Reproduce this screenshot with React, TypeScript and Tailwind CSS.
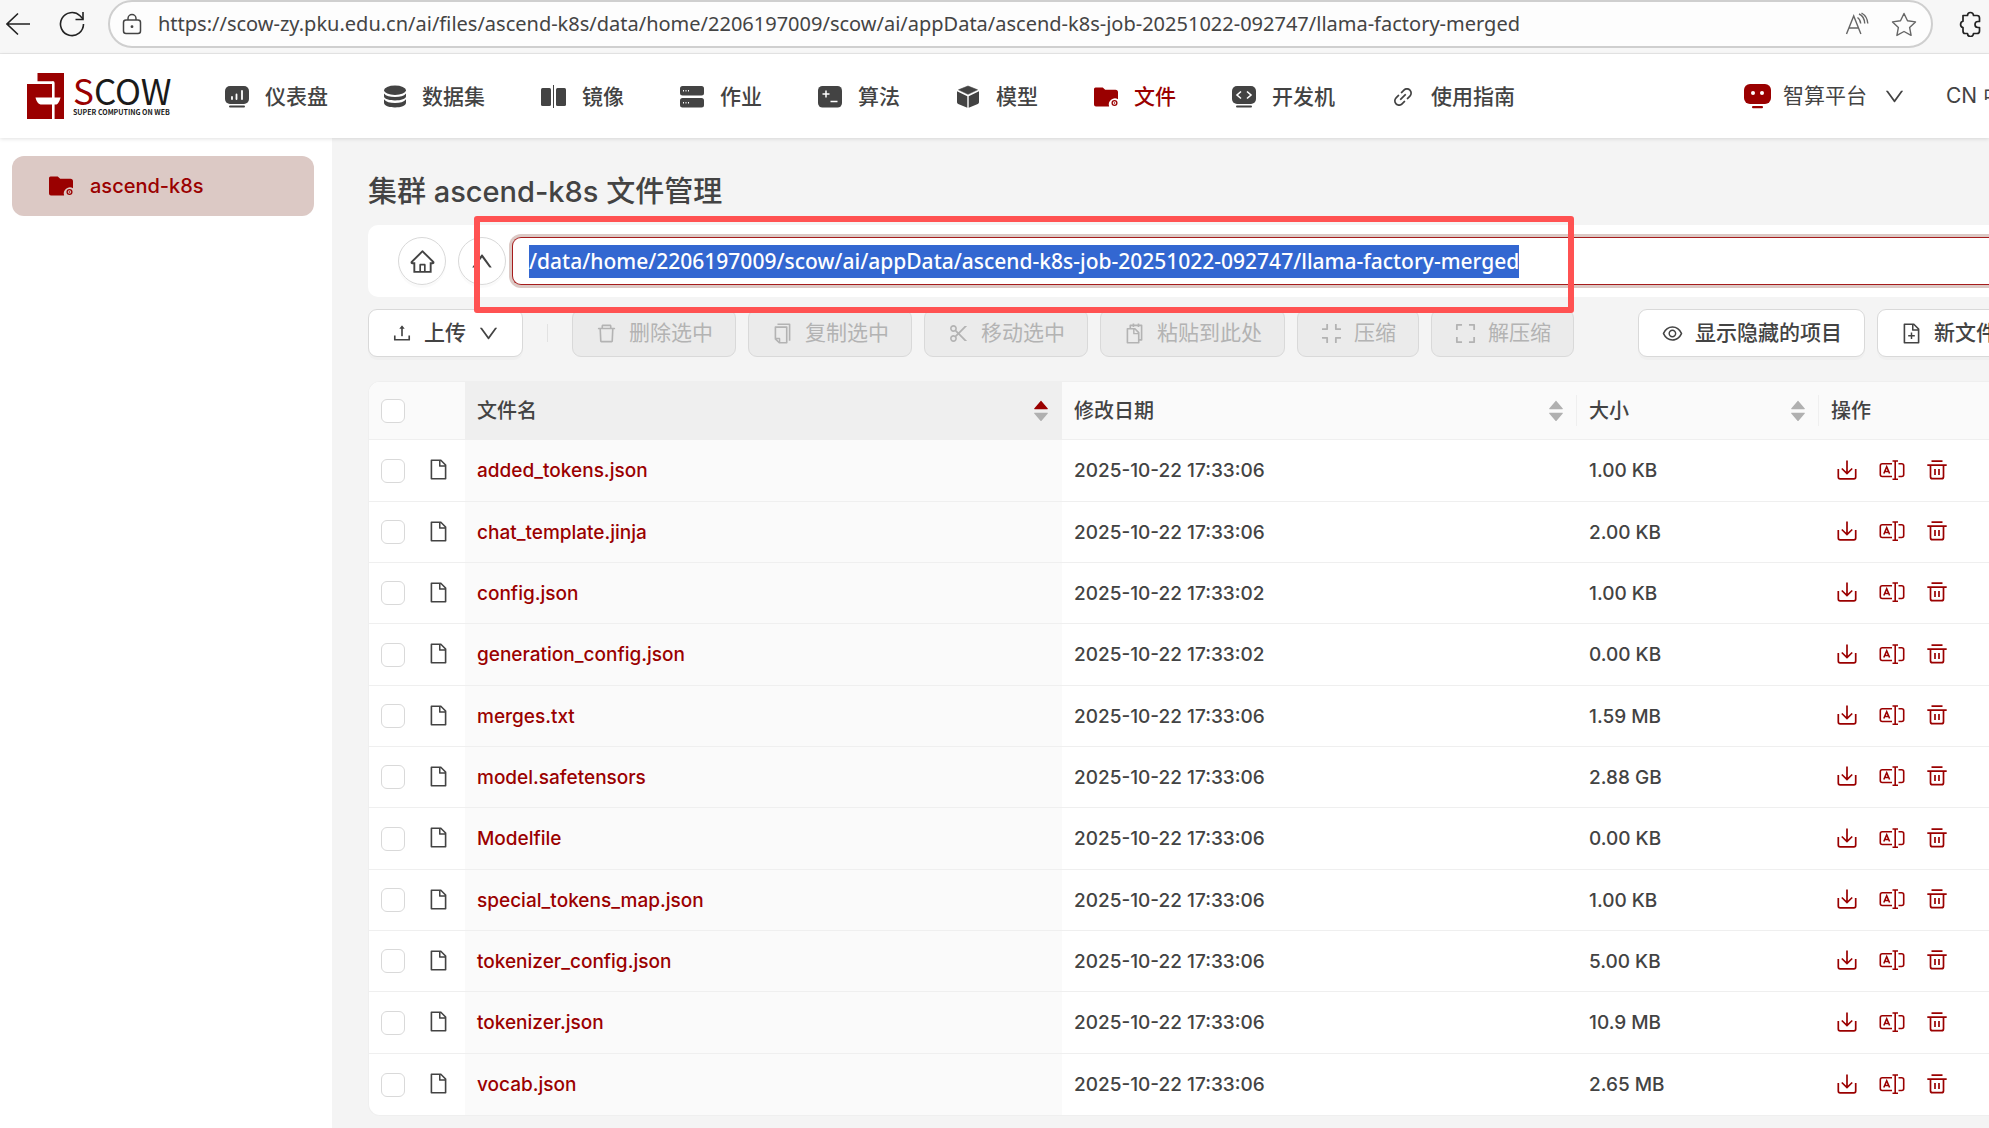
import type { ReactNode } from 'react';
import {
  AiOutlineHome, AiOutlineUp, AiOutlineUpload, AiOutlineDown, AiOutlineDelete, AiOutlineCopy,
  AiOutlineScissor, AiOutlineSnippets, AiOutlineCompress, AiOutlineExpand, AiOutlineEye,
  AiOutlineFileAdd, AiOutlineFile, AiFillCaretUp, AiFillCaretDown, AiOutlineLink,
} from 'react-icons/ai';

const FILES = [
  ['added_tokens.json', '2025-10-22 17:33:06', '1.00 KB'],
  ['chat_template.jinja', '2025-10-22 17:33:06', '2.00 KB'],
  ['config.json', '2025-10-22 17:33:02', '1.00 KB'],
  ['generation_config.json', '2025-10-22 17:33:02', '0.00 KB'],
  ['merges.txt', '2025-10-22 17:33:06', '1.59 MB'],
  ['model.safetensors', '2025-10-22 17:33:06', '2.88 GB'],
  ['Modelfile', '2025-10-22 17:33:06', '0.00 KB'],
  ['special_tokens_map.json', '2025-10-22 17:33:06', '1.00 KB'],
  ['tokenizer_config.json', '2025-10-22 17:33:06', '5.00 KB'],
  ['tokenizer.json', '2025-10-22 17:33:06', '10.9 MB'],
  ['vocab.json', '2025-10-22 17:33:06', '2.65 MB'],
];

/* ---------- icons ---------- */

const DashboardIcon = () => (
  <svg width="24" height="24" viewBox="0 0 24 24" fill="currentColor" aria-hidden="true">
    <rect y="1" width="24" height="18" rx="5" />
    <g stroke="#fff" strokeWidth="1.8" strokeLinecap="round">
      <path d="M7 12v2M11.500 9.500v4.500M17 6v8" />
    </g>
    <rect x="4" y="20.500" width="16" height="2" rx="1" />
  </svg>
);

const DatasetIcon = () => (
  <svg width="22" height="24" viewBox="1 0 22 24" fill="currentColor" aria-hidden="true">
    <ellipse cx="12" cy="5.200" rx="11" ry="4.700" />
    <path d="M1 8.500c2 2.600 6 3.400 11 3.400s9-.8 11-3.400v2.700c0 2.500-5 4.200-11 4.200S1 13.700 1 11.200z" />
    <path d="M1 14.300c2 2.800 6 3.700 11 3.700s9-.9 11-3.700v3.500c0 2.900-5 4.700-11 4.700S1 20.700 1 17.800z" />
  </svg>
);

const ImageIcon = () => (
  <svg width="25" height="24" viewBox="0 0 25 24" fill="currentColor" aria-hidden="true">
    <rect y="3" width="10" height="18" rx="1.500" />
    <rect x="12" width="1" height="23" />
    <rect x="15" y="3" width="10" height="18" rx="1.500" />
  </svg>
);

const JobIcon = () => (
  <svg width="24" height="24" viewBox="0 0 24 24" fill="currentColor" aria-hidden="true">
    <rect y="1" width="24" height="9.500" rx="2.500" />
    <rect y="13" width="24" height="9.500" rx="2.500" />
    <g fill="#fff">
      <path d="M3 5h1v1.500H3zM5.500 5h1v1.500h-1zM8 5h1v1.500H8zM3 17h1v1.500H3zM5.500 17h1v1.500h-1zM8 17h1v1.500H8z" />
    </g>
  </svg>
);

const AlgorithmIcon = () => (
  <svg width="24" height="24" viewBox="0 0 24 24" fill="currentColor" aria-hidden="true">
    <rect y="1" width="24" height="21.500" rx="4.500" />
    <path d="M8 5.500v7M4.500 9h7M12.500 16.500h7" stroke="#fff" strokeWidth="1.500" />
  </svg>
);

const ModelIcon = () => (
  <svg width="24" height="24" viewBox="0 0 24 24" fill="currentColor" aria-hidden="true">
    <path d="M12 1l9.500 3.800L12 9.300 2.500 4.800z" strokeLinejoin="round" stroke="currentColor" strokeWidth=".6" />
    <path d="M1 6.300l10.300 4.900v11.600L2.200 19Q1 18.500 1 17.300zM23 6.300l-10.300 4.900v11.600l9.100-3.800q1.200-.5 1.200-1.700z" />
  </svg>
);

const FolderIcon = () => (
  <svg width="24" height="24" viewBox="0 0 24 24" fill="currentColor" aria-hidden="true">
    <path d="M1.500 2.500h7.200l2.500 2.300h10.300A2.500 2.500 0 0 1 24 7.300V14.200a6.200 6.200 0 0 0-8.900 7.300H2A2 2 0 0 1 0 19.500V4a1.500 1.500 0 0 1 1.500-1.500z" />
    <circle cx="20.500" cy="18" r="2.400" fill="none" stroke="currentColor" strokeWidth="1.300" />
    <circle cx="20.500" cy="18" r=".8" />
  </svg>
);

const DevIcon = () => (
  <svg width="24" height="24" viewBox="0 0 24 24" fill="currentColor" aria-hidden="true">
    <rect y="1" width="24" height="18" rx="5" />
    <path d="M9 6.500L5 10l4 3.500M15 6.500l4 3.500-4 3.500" fill="none" stroke="#fff" strokeWidth="1.600" />
    <rect x="4" y="20.500" width="16" height="2" rx="1" />
  </svg>
);

const RobotIcon = () => (
  <svg width="27" height="25" viewBox="0 0 27 25" fill="#9a0000" aria-hidden="true">
    <rect width="27" height="20" rx="6" />
    <circle cx="9" cy="9" r="2" fill="#fff" />
    <circle cx="18" cy="9" r="2" fill="#fff" />
    <rect x="8" y="22" width="11" height="2.200" rx="1" />
  </svg>
);

const LogoMark = () => (
  <svg width="37" height="46" viewBox="0 0 37 46" aria-hidden="true">
    <path d="M10.500 0H37v46h-9.500V10q0-1.800-1.800-1.800H10.500z" fill="#9a0000" />
    <path d="M0 11h25v35H0z" fill="#9a0000" />
    <path d="M25 8.500h2.200V46H25z" fill="#fff" />
    <path d="M8.500 24.500h25c-1 4-2.500 6.500-4 7h-16c-2.500-.5-4-3-5-7z" fill="#fff" />
  </svg>
);

const BackIcon = () => (
  <svg width="25" height="24" viewBox="0 0 25 24" fill="none" stroke="currentColor" strokeWidth="1.600" aria-hidden="true">
    <path d="M24 12H1M12 1.500L1 12l11 10.500" />
  </svg>
);

const ReloadIcon = () => (
  <svg width="26" height="26" viewBox="0 0 26 26" fill="none" stroke="currentColor" strokeWidth="1.600" aria-hidden="true">
    <path d="M24.500 13A11.500 11.500 0 1 1 21 4.800L24 8" />
    <path d="M24 1v7.500h-7.500" />
  </svg>
);

const LockIcon = () => (
  <svg width="20" height="22" viewBox="0 0 20 22" fill="none" stroke="currentColor" strokeWidth="1.500" aria-hidden="true">
    <rect x="1.500" y="7" width="17" height="13.500" rx="2.500" />
    <path d="M6 7V5.500a4 4 0 0 1 8 0V7" />
    <circle cx="10" cy="13.700" r="1.400" fill="currentColor" stroke="none" />
  </svg>
);

const ReadAloudIcon = () => (
  <svg width="24" height="24" viewBox="0 0 24 24" fill="none" stroke="currentColor" strokeWidth="1.400" aria-hidden="true">
    <path d="M1.500 22L8.700 4l7.200 18M4 16h9.500M12.500 5.500c2 1.300 3 3.500 3.200 6M14 2c3.500 1.500 5.500 5 5.700 9.500M16.500 1c3.500 2 6 6 6.300 10.500" />
  </svg>
);

const StarIcon = () => (
  <svg width="26" height="25" viewBox="0 0 26 25" fill="none" stroke="currentColor" strokeWidth="1.400" strokeLinejoin="round" aria-hidden="true">
    <path d="M13 1.500l3.500 7.300 8 1.100-5.900 5.500 1.500 8-7.100-3.900-7.100 3.900 1.500-8-5.900-5.500 8-1.100z" />
  </svg>
);

const PuzzleIcon = () => (
  <svg width="24" height="26" viewBox="0 0 24 26" fill="none" stroke="currentColor" strokeWidth="1.700" strokeLinejoin="round" aria-hidden="true">
    <path d="M5 4.500h4.500a3 3 0 0 1 6 0H19q2.500 0 2.500 2.500v3.500h-1.500a3 3 0 0 0 0 6h1.500V20q0 2.500-2.500 2.500h-3.500a3 3 0 0 1-6 0H7Q5 22.500 5 20v-3.500a3.200 3.200 0 0 1 0-6.200z" />
  </svg>
);

const DownloadIcon = () => (
  <svg width="20" height="20" viewBox="0 0 20 20" fill="none" stroke="currentColor" strokeWidth="1.700" aria-hidden="true">
    <path d="M10 .5v13M4.800 8.500L10 13.500l5.200-5M1.300 9v8q0 1.800 1.800 1.800h13.800q1.800 0 1.800-1.800V9" />
  </svg>
);

const RenameIcon = () => (
  <svg width="26" height="20" viewBox="0 0 26 20" fill="none" stroke="currentColor" strokeWidth="1.600" aria-hidden="true">
    <path d="M13 3.800H3.300Q1.300 3.800 1.300 5.800v8.700q0 2 2 2H13M19.500 3.800h3.200q2 0 2 2v8.700q0 2-2 2h-3.200M13.500 1h5.500M13.500 19.200H19M16.200 1v18.200" />
    <path d="M4.800 13.500l2.900-6.700 2.900 6.700M5.800 11.500h4" />
  </svg>
);

const TrashIcon = () => (
  <svg width="20" height="20" viewBox="0 0 20 20" fill="none" stroke="currentColor" strokeWidth="1.700" aria-hidden="true">
    <path d="M4.500 1.200h11M.3 5.200h19.400M3.500 5.200v11.500q0 2 2 2h9q2 0 2-2V5.200M8 9v6M12 9v6" />
  </svg>
);

/* ---------- building blocks ---------- */

const NAV: { label: string; icon: ReactNode; active?: boolean }[] = [
  { label: '仪表盘', icon: <DashboardIcon /> },
  { label: '数据集', icon: <DatasetIcon /> },
  { label: '镜像', icon: <ImageIcon /> },
  { label: '作业', icon: <JobIcon /> },
  { label: '算法', icon: <AlgorithmIcon /> },
  { label: '模型', icon: <ModelIcon /> },
  { label: '文件', icon: <FolderIcon />, active: true },
  { label: '开发机', icon: <DevIcon /> },
  { label: '使用指南', icon: <AiOutlineLink size={24} /> },
];

function ToolButton({ icon, children, disabled }: { icon: ReactNode; children: ReactNode; disabled?: boolean }) {
  return (
    <button
      type="button"
      disabled={disabled}
      className="flex h-12 shrink-0 items-center gap-[11px] rounded-[9px] border border-[#d9d9d9] bg-white px-[22px] whitespace-nowrap shadow-[0_3px_0_rgba(0,0,0,0.02)] disabled:bg-[#ebebeb] disabled:text-[#b3b3b3] disabled:shadow-none"
    >
      {icon}
      {children}
    </button>
  );
}

function Sorter({ asc }: { asc?: boolean }) {
  return (
    <span className="flex flex-col items-center text-[#b0b0b0]">
      <AiFillCaretUp size={20} className={asc ? '-mb-2 text-[#9a0000]' : '-mb-2'} />
      <AiFillCaretDown size={20} />
    </span>
  );
}

const CHECKBOX = 'block size-6 appearance-none rounded-md border border-[#d9d9d9] bg-white';

export default function App() {
  return (
    <div className="flex min-h-screen flex-col overflow-hidden bg-[#f4f4f4] font-['Inter','Noto_Sans_CJK_SC',sans-serif] text-[21px] text-[#434343]">
      {/* Browser bar */}
      <div className="flex h-[54px] shrink-0 items-start border-b border-[#e8e8e8] bg-[#f7f7f7] text-[#222]">
        <div className="flex h-12 w-[108px] items-center gap-7 pl-1.5">
          <button type="button" aria-label="Back"><BackIcon /></button>
          <button type="button" aria-label="Reload"><ReloadIcon /></button>
        </div>
        <div className="flex h-12 flex-1 items-center rounded-full border-2 border-[#cfcfcf] bg-[#fdfdfd] pr-3.5 pl-3 text-[#444]">
          <LockIcon />
          <input
            aria-label="Address"
            readOnly
            defaultValue="https://scow-zy.pku.edu.cn/ai/files/ascend-k8s/data/home/2206197009/scow/ai/appData/ascend-k8s-job-20251022-092747/llama-factory-merged"
            className="min-w-0 flex-1 bg-transparent px-4 font-['Noto_Sans',sans-serif] text-[20px] outline-none"
          />
          <div className="flex items-center gap-[22px] text-[#666]">
            <button type="button" aria-label="Read aloud"><ReadAloudIcon /></button>
            <button type="button" aria-label="Favorite"><StarIcon /></button>
          </div>
        </div>
        <button type="button" aria-label="Extensions" className="flex h-12 w-14 items-center justify-end pr-[7px]">
          <PuzzleIcon />
        </button>
      </div>

      {/* Site header */}
      <header className="relative z-10 flex h-[84px] shrink-0 items-center bg-white pl-[27px] whitespace-nowrap shadow-[0_1px_4px_rgba(0,0,0,0.12)]">
        <a href="#" className="flex w-[198px] shrink-0 items-center gap-[9px]">
          <LogoMark />
          <span className="flex flex-col font-['Noto_Sans_CJK_SC',sans-serif] text-[#1a1a1a]">
            <span className="text-[35px] leading-8"><span className="text-[#9a0000]">S</span>COW</span>
            <span className="text-[7px] leading-3 font-bold">SUPER COMPUTING ON WEB</span>
          </span>
        </a>
        <nav className="flex shrink-0 gap-14 pt-0.5 font-medium">
          {NAV.map((n) => (
            <a key={n.label} href="#" className={n.active ? 'flex items-center gap-4 text-[#9a0000]' : 'flex items-center gap-4'}>
              {n.icon}
              {n.label}
            </a>
          ))}
        </nav>
        <div className="ml-auto flex w-[245px] shrink-0 items-center overflow-hidden">
          <button type="button" className="flex shrink-0 items-center gap-3">
            <RobotIcon />
            智算平台
            <AiOutlineDown size={23} className="ml-1" />
          </button>
          <button type="button" className="ml-10 shrink-0">CN 中文</button>
        </div>
      </header>

      <div className="flex flex-1">
        {/* Sidebar */}
        <aside className="w-[332px] shrink-0 bg-white px-3 pt-[18px]">
          <a href="#" className="mr-1.5 flex h-15 items-center gap-[17px] rounded-xl bg-[#dcc9c5] pl-[37px] text-[20px] font-medium text-[#9a0000]">
            <FolderIcon />
            ascend-k8s
          </a>
        </aside>

        <main className="min-w-0 flex-1 overflow-hidden pt-8 pl-9">
          <h1 className="h-[55px] text-[29px] leading-[44px] font-medium">集群 ascend-k8s 文件管理</h1>

          {/* Path bar */}
          <div className="relative flex h-[72px] items-center gap-3 rounded-l-[10px] bg-white pl-[30px]">
            <button type="button" aria-label="Home" className="flex size-12 shrink-0 items-center justify-center rounded-full border border-[#d9d9d9] shadow-[0_3px_0_rgba(0,0,0,0.02)]">
              <AiOutlineHome size={27} />
            </button>
            <button type="button" aria-label="Parent folder" className="flex size-12 shrink-0 items-center justify-center rounded-full border border-[#d9d9d9] shadow-[0_3px_0_rgba(0,0,0,0.02)]">
              <AiOutlineUp size={26} />
            </button>
            <div className="-ml-1.5 flex h-12 flex-1 items-center rounded-l-[9px] border border-r-0 border-[#a61c1c] bg-white pl-4 ring-3 ring-[#dcc9c5]">
              <input
                aria-label="Path"
                defaultValue="/data/home/2206197009/scow/ai/appData/ascend-k8s-job-20251022-092747/llama-factory-merged"
                className="field-sizing-content h-[33px] bg-[#3367d1] font-['Noto_Sans',sans-serif] font-medium text-white outline-none"
              />
            </div>
            <div className="pointer-events-none absolute -top-[9px] left-[106px] h-[97px] w-[1100px] rounded-[3px] border-6 border-[#ff5252]" />
          </div>

          {/* Toolbar */}
          <div className="mt-3 flex gap-3">
            <ToolButton icon={<AiOutlineUpload size={22} />}>
              <span className="font-medium">上传</span>
              <AiOutlineDown size={23} />
            </ToolButton>
            <div className="mx-3 my-[15px] w-px shrink-0 bg-[#e2e2e2]" />
            <ToolButton disabled icon={<AiOutlineDelete size={23} />}>删除选中</ToolButton>
            <ToolButton disabled icon={<AiOutlineCopy size={23} />}>复制选中</ToolButton>
            <ToolButton disabled icon={<AiOutlineScissor size={23} />}>移动选中</ToolButton>
            <ToolButton disabled icon={<AiOutlineSnippets size={23} />}>粘贴到此处</ToolButton>
            <ToolButton disabled icon={<AiOutlineCompress size={23} />}>压缩</ToolButton>
            <ToolButton disabled icon={<AiOutlineExpand size={23} />}>解压缩</ToolButton>
            <div className="w-10 shrink-0" />
            <ToolButton icon={<AiOutlineEye size={23} />}><span className="font-medium">显示隐藏的项目</span></ToolButton>
            <ToolButton icon={<AiOutlineFileAdd size={23} />}><span className="font-medium">新文件</span></ToolButton>
          </div>

          {/* File table */}
          <div className="mt-6 overflow-hidden rounded-l-xl border-y border-l border-[#efefef] bg-white">
            <table className="w-full table-fixed border-separate border-spacing-0 text-left text-[19px] font-medium">
              <colgroup>
                <col className="w-[52px]" />
                <col className="w-11" />
                <col className="w-[597px]" />
                <col className="w-[515px]" />
                <col className="w-[242px]" />
                <col />
              </colgroup>
              <thead className="text-[20px]">
                <tr className="h-[58px] bg-[#fafafa] *:border-b *:border-[#efefef] *:font-medium">
                  <th className="pl-3"><input type="checkbox" aria-label="Select all" className={CHECKBOX} /></th>
                  <th />
                  <th className="bg-[#efefef] pr-[11px] pl-3">
                    <div className="flex items-center justify-between">文件名<Sorter asc /></div>
                  </th>
                  <th className="pl-3">
                    <div className="flex h-[31px] items-center justify-between border-r border-[#efefef] pr-2.5">修改日期<Sorter /></div>
                  </th>
                  <th className="pl-3">
                    <div className="flex h-[31px] items-center justify-between border-r border-[#efefef] pr-2.5">大小<Sorter /></div>
                  </th>
                  <th className="pl-3">操作</th>
                </tr>
              </thead>
              <tbody>
                {FILES.map(([name, date, size]) => (
                  <tr key={name} className="h-[61px] *:border-b *:border-[#efefef] nth-[3n+1]:h-[62px] last:*:border-b-0">
                    <td className="pl-3"><input type="checkbox" aria-label={'Select ' + name} className={CHECKBOX} /></td>
                    <td className="pb-0.5 pl-1.5"><AiOutlineFile size={23} /></td>
                    <td className="bg-[#fafafa] pt-0.5 pl-3"><a href="#" className="text-[#9a0000]">{name}</a></td>
                    <td className="pt-0.5 pl-3">{date}</td>
                    <td className="pt-0.5 pl-3">{size}</td>
                    <td className="pb-0.5 pl-[18px]">
                      <div className="flex items-center gap-[22px] text-[#9a0000]">
                        <button type="button" aria-label={'Download ' + name}><DownloadIcon /></button>
                        <button type="button" aria-label={'Rename ' + name}><RenameIcon /></button>
                        <button type="button" aria-label={'Delete ' + name}><TrashIcon /></button>
                      </div>
                    </td>
                  </tr>
                ))}
              </tbody>
            </table>
          </div>
        </main>
      </div>
    </div>
  );
}
